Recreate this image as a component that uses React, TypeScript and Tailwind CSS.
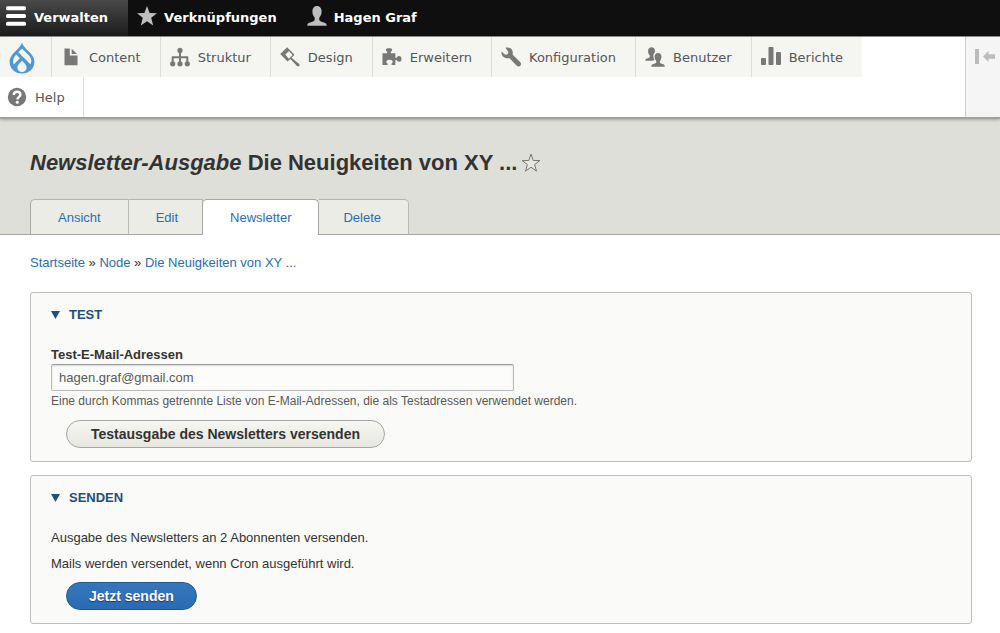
import React, { ReactNode } from "react";

type IconProps = { className?: string };

function HamburgerIcon() {
  return (
    <svg viewBox="0 0 20 20" className="w-5 h-5 fill-white" aria-hidden="true">
      <rect x="0" y="0.2" width="20" height="4" rx="1.5" />
      <rect x="0" y="8" width="20" height="4" rx="1.5" />
      <rect x="0" y="15.8" width="20" height="4" rx="1.5" />
    </svg>
  );
}

function StarIcon() {
  return (
    <svg viewBox="0 0 20 20" className="w-5 h-5 fill-[#bebebe]" aria-hidden="true">
      <path d="M10 0l2.600 6.900 7.400.3-5.800 4.600 2 7.800L10 15.300l-6.200 4.300 2-7.800L0 7.200l7.400-.3z" />
    </svg>
  );
}

function PersonIcon() {
  return (
    <svg viewBox="0 0 20 20" className="w-5 h-5 fill-[#bebebe]" aria-hidden="true">
      <path d="M10 0C7.200 0 5.400 2 5.400 5.200c0 2.600.7 4.300 1.700 5.600.9 1.200.9 2.700.3 3.700-.8 1.200-3 1.500-5 2.300-1.500.6-2 1.300-2.200 3h19.600c-.2-1.700-.7-2.400-2.200-3-2-.8-4.200-1.100-5-2.300-.6-1-.6-2.500.3-3.700 1-1.300 1.700-3 1.700-5.600C14.600 2 12.800 0 10 0z" />
    </svg>
  );
}

function DropIcon() {
  return (
    <svg viewBox="0 0 26 32" className="w-[26px] h-8" aria-hidden="true">
      <path
        className="fill-[#5097d3]"
        d="M13 .5c-1 3.400-3.800 6-6.300 8.600C3.300 12.500.6 15.500.6 19.800.6 26.500 6 31.600 13 31.600s12.400-5.100 12.400-11.800c0-4.300-2.700-7.300-6.100-10.700C16.800 6.500 14 3.900 13 .5z"
      />
      <g className="fill-[#f5f5f2]">
        <path d="M9.300 10.200l3-3c.5-.5 1.100-.5 1.600 0l6 6.200c1.800 2 2.500 4 2.300 6.300-.1 1-.4 1.900-.8 2.600z" />
        <path d="M7.300 12.600l3.600 3.700-6.100 6.300c-1.500-4-.5-7 2.500-10z" />
        <path d="M13 18.600c-1.200 1.900-4.600 4-4.600 7.100 0 2.500 2 4.200 4.600 4.200s4.600-1.700 4.600-4.200c0-3.100-3.400-5.200-4.600-7.100z" />
      </g>
    </svg>
  );
}

function FileIcon({ className }: IconProps) {
  return (
    <svg viewBox="0 0 20 20" className={className} aria-hidden="true">
      <path d="M3.500 1.500h5.300v7h7.700v9.700h-13z" />
      <path d="M10.700 1.800l5.300 5.200h-5.300z" />
    </svg>
  );
}

function StructureIcon({ className }: IconProps) {
  return (
    <svg viewBox="0 0 20 20" className={className} aria-hidden="true">
      <path d="M9 4h2v12H9zM2.600 9.200h14.800v2H2.600zM1.700 10.400c0-.8.400-1.200 1-1.200h1V16h-2zM16.300 9.200h1c.6 0 1 .4 1 1.200V16h-2z" />
      <circle cx="10" cy="3.400" r="2.600" />
      <circle cx="2.700" cy="16.800" r="2.600" />
      <circle cx="10" cy="16.800" r="2.600" />
      <circle cx="17.300" cy="16.800" r="2.600" />
    </svg>
  );
}

function BrushIcon({ className }: IconProps) {
  return (
    <svg viewBox="0 0 20 20" className={className} aria-hidden="true">
      <path
        fillRule="evenodd"
        d="M7.200.2l7.300 7.500-2.900 3 7.300 6.100c.9.800.9 1.700.2 2.300-.6.600-1.500.6-2.300-.3L10.400 12l-2.800 2.400L.2 6.900z M9 3.900L5.400 7.500l3.300 4.200 3.900-3.600z"
      />
    </svg>
  );
}

function PuzzleIcon({ className }: IconProps) {
  return (
    <svg viewBox="0 0 22 20" className={className} aria-hidden="true">
      <path d="M.5 5.800h5.200V4.200c-1-.5-1.500-1.200-1.500-2.100C4.200.8 5.600.3 7.700.3s3.500.5 3.500 1.800c0 .9-.5 1.600-1.500 2.100v1.600h5v5h1.500c.5-1.200 1.400-1.900 2.500-1.900 1.800 0 2.800 1.400 2.800 3.200s-1 3.200-2.800 3.200c-1.100 0-2-.7-2.500-1.900h-1.500v5.300h-4.300v-1.300c1-.6 1.400-1.300 1.400-2.200 0-1.300-1.500-2.300-3.500-2.300s-3.500 1-3.500 2.300c0 .9.400 1.600 1.400 2.200v1.300H.5z" />
    </svg>
  );
}

function WrenchIcon({ className }: IconProps) {
  return (
    <svg viewBox="0 0 20 20" className={className} aria-hidden="true">
      <path d="M4.500.7C6.700 0 9.200.5 10.600 2.200c1.300 1.600 1.500 3.600.9 5.400l7.600 7.300c1.200 1.200 1.200 2.800.2 3.800s-2.600 1-3.800-.2L8.300 11c-1.900.7-4 .4-5.600-1C.9 8.500.1 6.400.6 4.500l3 2.800c1 .8 2.400.5 3.100-.3.800-.8 1-2.200.1-3.100z" />
    </svg>
  );
}

function PeopleIcon({ className }: IconProps) {
  return (
    <svg viewBox="0 0 21 21" className={className} aria-hidden="true">
      <path d="M6.900.3c2 0 3.600 1.300 3.600 3.600 0 .9-.1 1.600-.4 2.200-1.100 1-1.400 2.300-1.300 3.900.1 1.300.5 2.400 1.200 3.300-.8.700-1.700.9-2.500 1.200H.3c.1-1.200.5-1.900 1.600-2.300 1.300-.5 2.500-.8 3-1.700.3-.7.200-1.500-.3-2.200C3.700 7.400 3.200 6 3.200 4.100 3.200 1.600 4.900.3 6.900.3z" />
      <path d="M13.700 6.300c-2 0-3.600 1.400-3.600 3.800 0 1.900.5 3.200 1.300 4.200.6.700.7 1.500.3 2.200-.5.800-2.200 1.100-3.500 1.600-1.100.4-1.600 1.200-1.600 2.600h14.200c0-1.400-.5-2.200-1.600-2.600-1.300-.5-3-.8-3.500-1.600-.4-.7-.3-1.500.3-2.200.8-1 1.300-2.300 1.300-4.200 0-2.400-1.600-3.800-3.600-3.800z" />
    </svg>
  );
}

function ChartIcon({ className }: IconProps) {
  return (
    <svg viewBox="0 0 20 20" className={className} aria-hidden="true">
      <rect x="0" y="11" width="5" height="7" rx="1" />
      <rect x="7.500" y="0" width="5" height="18" rx="1" />
      <rect x="15" y="5" width="5" height="13" rx="1" />
    </svg>
  );
}

function HelpIcon({ className }: IconProps) {
  return (
    <svg viewBox="0 0 20 20" className={className} aria-hidden="true">
      <circle cx="10" cy="10" r="9.200" />
      <path
        d="M6.800 8c0-2 1.400-3.300 3.300-3.300s3.300 1.200 3.300 2.900c0 2.300-3 2.400-3 5"
        fill="none"
        className="stroke-white"
        strokeWidth="2.400"
      />
      <circle cx="10.300" cy="15.200" r="1.500" className="fill-white" />
    </svg>
  );
}

type MenuItem = { label: string; icon: (props: IconProps) => ReactNode };

const menu: MenuItem[] = [
  { label: "Content", icon: FileIcon },
  { label: "Struktur", icon: StructureIcon },
  { label: "Design", icon: BrushIcon },
  { label: "Erweitern", icon: PuzzleIcon },
  { label: "Konfiguration", icon: WrenchIcon },
  { label: "Benutzer", icon: PeopleIcon },
  { label: "Berichte", icon: ChartIcon },
];

const tabs = [
  { label: "Ansicht", padding: "px-[27px]" },
  { label: "Edit", padding: "pl-[27px] pr-6" },
  { label: "Newsletter", padding: "px-[27px]", active: true },
  { label: "Delete", padding: "pl-6 pr-[27px]" },
];

function AdminBar() {
  return (
    <nav className="flex h-9 bg-[#0f0f0f] text-white text-[13px] font-bold" aria-label="Toolbar">
      <a href="#" className="flex items-start gap-2 pl-1.5 pr-5 pt-1.5 bg-linear-to-b from-[#4a4a4a] to-[#1c1c1c]">
        <HamburgerIcon />
        <span className="leading-6">Verwalten</span>
      </a>
      <a href="#" className="flex items-start gap-[7px] pl-[9px] pr-[21px] pt-1.5">
        <StarIcon />
        <span className="leading-6">Verknüpfungen</span>
      </a>
      <a href="#" className="flex items-start gap-[7px] pl-[9px] pr-[21px] pt-1.5">
        <PersonIcon />
        <span className="leading-6">Hagen Graf</span>
      </a>
    </nav>
  );
}

function AdminTray() {
  return (
    <div className="relative flex border-t border-[#8a8a86] border-b-2 border-b-[#a0a09e] bg-white text-[13px] text-[#565656] shadow-[0_1px_3px_rgba(0,0,0,0.25)]">
      <nav className="grow" aria-label="Verwaltung">
        <ul className="flex">
          <li className="border-r border-[#dddddd] bg-[#f5f5f2]">
            <a href="#" aria-label="Startseite" className="flex h-10 w-[51px] items-center pl-[9px] pt-0.5">
              <DropIcon />
            </a>
          </li>
          {menu.map(({ label, icon: Icon }) => (
            <li key={label} className="border-r border-[#dddddd] bg-[#f5f5f2] last:border-r-0">
              <a href="#" className="flex h-10 items-center gap-2 pl-[9px] pr-[19px]">
                <Icon className="w-5 h-5 fill-[#787878]" />
                <span className="pt-px">{label}</span>
              </a>
            </li>
          ))}
        </ul>
        <ul className="flex">
          <li className="border-r border-[#dddddd]">
            <a href="#" className="flex h-10 items-center gap-2 pl-[7px] pr-[18px]">
              <HelpIcon className="w-5 h-5 fill-[#787878]" />
              <span className="pt-px">Help</span>
            </a>
          </li>
        </ul>
      </nav>
      <div className="w-[35px] shrink-0 border-l border-[#cccccc] bg-[#f5f5f5]">
        <button type="button" aria-label="Vertikale Ausrichtung" className="flex h-10 w-full items-center pl-[9px]">
          <svg viewBox="0 0 20 16" className="w-5 h-4 fill-[#bcbcbc]" aria-hidden="true">
            <rect x="0" y="0" width="4" height="15" />
            <path d="M8 7.500L13.500 2v3.200H20v4.600h-6.500V13z" />
          </svg>
        </button>
      </div>
    </div>
  );
}

function PageHeader() {
  return (
    <header className="border-b border-[#a6a6a2] bg-[#dedfd8] pl-[30px] pt-[30px]">
      <div className="flex items-center gap-1">
        <h1 className="text-[22px] leading-7 font-bold text-[#333333]">
          <em>Newsletter-Ausgabe</em> Die Neuigkeiten von XY ...
        </h1>
        <button type="button" aria-label="Zu Verknüpfungen hinzufügen">
          <svg viewBox="0 0 20 20" className="w-5 h-5 fill-[#e8e8e2] stroke-[#77776f]" aria-hidden="true">
            <path d="M10 1.200l2.200 6.300 6.600.1-5.200 4 1.900 6.500-5.500-3.900-5.500 3.900 1.900-6.500-5.200-4 6.600-.1z" />
          </svg>
        </button>
      </div>
      <nav className="-mb-px mt-[22px] flex text-[13px] text-[#2a6db5]" aria-label="Reiter">
        {tabs.map(({ label, padding, active }) =>
          active ? (
            <a key={label} href="#" aria-current="page" className={`-ml-px h-9 rounded-t-[5px] border border-b-0 border-[#a6a6a2] bg-white leading-9 ${padding}`}>
              {label}
            </a>
          ) : (
            <a key={label} href="#" className={`h-9 border border-l-0 border-[#a6a6a2] border-t-[#b4b4b0] border-r-[#b9b9b5] bg-[#ecece7] leading-9 first:rounded-tl-[5px] first:border-l last:rounded-tr-[5px] ${padding}`}>
              {label}
            </a>
          )
        )}
      </nav>
    </header>
  );
}

function Panel({ title, children }: { title: string; children: ReactNode }) {
  return (
    <details open className="rounded-[3px] border border-[#bfbfba] bg-[#fafaf8] px-5 pt-3 pb-[13px]">
      <summary className="flex list-none items-center gap-[9px] leading-5 font-bold text-[#1d4f82] uppercase">
        <svg viewBox="0 0 9 8" className="w-[9px] h-2 fill-[#1d4f82]" aria-hidden="true">
          <path d="M0 0h9L4.500 8z" />
        </svg>
        {title}
      </summary>
      {children}
    </details>
  );
}

export function App() {
  return (
    <div className="bg-white font-['DejaVu_Sans',sans-serif]">
      <AdminBar />
      <AdminTray />
      <div className="font-['Liberation_Sans',Arial,sans-serif]">
        <PageHeader />
        <main className="pl-[30px] pr-7 pb-2 text-[13px] text-[#333333]">
          <nav className="pt-[18px] leading-5" aria-label="Breadcrumb">
            <a href="#" className="text-[#2a6db5]">Startseite</a> »{" "}
            <a href="#" className="text-[#2a6db5]">Node</a> »{" "}
            <a href="#" className="text-[#2a6db5]">Die Neuigkeiten von XY ...</a>
          </nav>

          <form className="mt-[19px] flex flex-col gap-[13px]" onSubmit={(e) => e.preventDefault()}>
            <Panel title="Test">
              <label htmlFor="test-address" className="mt-[21px] block leading-[18px] font-bold">
                Test-E-Mail-Adressen
              </label>
              <input
                id="test-address"
                type="text"
                defaultValue="hagen.graf@gmail.com"
                aria-describedby="test-address-hint"
                className="block h-[27px] w-[463px] max-w-full rounded-[2px] border border-[#b8b8b8] border-t-[#999999] bg-[#fcfcfa] px-[7px] text-[#595959] shadow-[inset_0_1px_2px_rgba(0,0,0,0.15)]"
              />
              <p id="test-address-hint" className="text-xs leading-5 text-[#595959]">
                Eine durch Kommas getrennte Liste von E-Mail-Adressen, die als Testadressen verwendet werden.
              </p>
              <button type="submit" className="mt-[9px] ml-[15px] block h-7 rounded-full border border-[#a6a6a6] bg-linear-to-b from-[#f6f6f3] to-[#e7e7df] px-6 text-sm font-bold">
                Testausgabe des Newsletters versenden
              </button>
            </Panel>

            <Panel title="Senden">
              <p className="mt-5 leading-5">Ausgabe des Newsletters an 2 Abonnenten versenden.</p>
              <p className="mt-1.5 leading-5">Mails werden versendet, wenn Cron ausgeführt wird.</p>
              <button type="submit" className="mt-2 ml-[15px] block h-7 rounded-full border border-[#1e5c90] bg-linear-to-b from-[#3577bd] to-[#2b6ab0] px-[22px] text-sm font-bold text-white [text-shadow:0_1px_1px_rgba(0,0,0,0.5)]">
                Jetzt senden
              </button>
            </Panel>
          </form>
        </main>
      </div>
    </div>
  );
}
export default App;
